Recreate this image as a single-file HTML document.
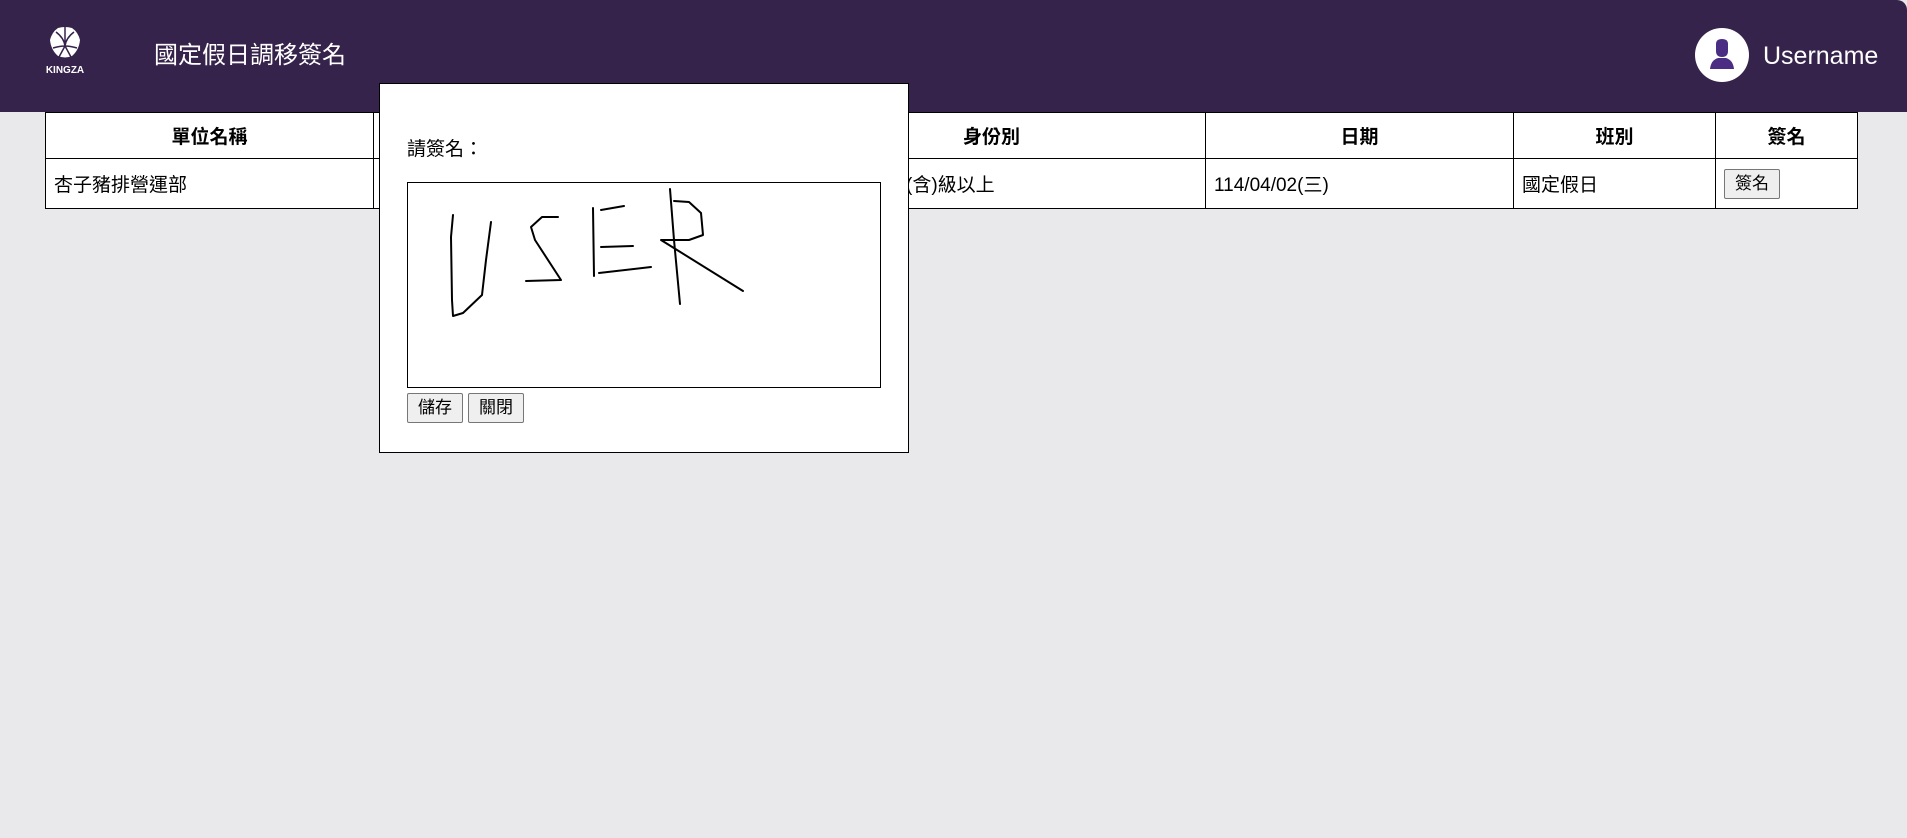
<!DOCTYPE html>
<html><head><meta charset="utf-8"><style>
*{margin:0;padding:0;box-sizing:border-box}
body{width:1907px;height:838px;background:#e9e9eb;font-family:"Liberation Sans","Noto Sans CJK TC",sans-serif;position:relative;overflow:hidden}
.hdr{position:absolute;left:0;top:0;width:1907px;height:112px;background:#36234b;border-top-right-radius:10px}
.title{position:absolute;left:154px;top:41px;color:#fff;font-size:24px;line-height:30px}
.user{position:absolute;left:1763px;top:40px;color:#fff;font-size:25px;line-height:32px}
.av{position:absolute;left:1695px;top:28px;width:54px;height:54px;border-radius:50%;background:#fff;overflow:hidden}
table{position:absolute;left:45px;top:112px;width:1812px;border-collapse:collapse;background:#fff;font-size:19px;table-layout:fixed}
td,th{border:1.5px solid #000;padding:0 8px}
th{height:46px;font-weight:bold;text-align:center}
td{height:50px}
.btn{display:inline-block;border:1px solid #777;border-radius:2px;background:#efefef;font-size:17px;padding:3px 10px;line-height:22px}
.modal{position:absolute;left:379px;top:83px;width:530px;height:370px;background:#fff;border:1.5px solid #000}
.lab{position:absolute;left:407px;top:134px;font-size:19px}
.cv{position:absolute;left:407px;top:182px;width:474px;height:206px;border:1.5px solid #000;background:#fff}
</style></head><body>
<div class="hdr">
<svg style="position:absolute;left:42px;top:26px" width="46" height="52" viewBox="0 0 46 52">
<path d="M16 2 Q23 0 30 2 Q36 6 38 14 Q37 24 30 30 Q23 33 16 30 Q9 24 8 14 Q10 6 16 2 Z" fill="#fff"/>
<path d="M23 1 L23 20 M14 6 Q22 12 23 20 Q24 12 32 6 M11 22 Q18 20 23 20 Q28 20 35 22 M23 20 L17 31 M23 20 L29 31" stroke="#36234b" stroke-width="1.5" fill="none"/>
<text x="23" y="47" fill="#fff" font-size="10" font-weight="bold" text-anchor="middle" font-family="Liberation Sans">KINGZA</text>
</svg>
<div class="title">國定假日調移簽名</div>
<div class="av"><svg width="54" height="54" viewBox="0 0 54 54"><path d="M21 16 Q21 11 27 11 Q33 11 33 16 L33 23 Q33 29 27 29 Q21 29 21 23 Z" fill="#4b2e83"/><path d="M15 41 Q16 32 23 30 L31 30 Q38 32 39 41 Z" fill="#4b2e83"/></svg></div>
<div class="user">Username</div>
</div>
<table>
<colgroup><col style="width:328px"><col style="width:202px"><col style="width:202px"><col style="width:428px"><col style="width:308px"><col style="width:202px"><col style="width:142px"></colgroup>
<tr><th>單位名稱</th><th>姓名</th><th>職稱</th><th>身份別</th><th>日期</th><th>班別</th><th>簽名</th></tr>
<tr><td>杏子豬排營運部</td><td></td><td></td><td style="padding-left:128px">(含)級以上</td><td>114/04/02(三)</td><td>國定假日</td><td><span class="btn">簽名</span></td></tr>
</table>
<div class="modal"></div>
<div class="lab">請簽名：</div>
<div class="cv"></div>
<svg style="position:absolute;left:0;top:0" width="1907" height="838"><g fill="none" stroke="#000" stroke-width="2" stroke-linecap="round" stroke-linejoin="round">
<path d="M453 215 L451 237 L452 300 L453 316 L463 313 L482 295 L486 260 L491 222"/>
<path d="M558 217 L542 217 L531 227 L535 240 L561 280 L526 281"/>
<path d="M593 208 L594 276 M601 210 L624 206 M601 247 L633 246 M599 273 L651 267"/>
<path d="M670 189 L674 240 L680 304 M674 201 L689 202 L701 213 L703 235 L689 240 L661 240 L743 291"/>
</g></svg>
<span class="btn" style="position:absolute;left:407px;top:393px">儲存</span>
<span class="btn" style="position:absolute;left:468px;top:393px">關閉</span>
</body></html>
